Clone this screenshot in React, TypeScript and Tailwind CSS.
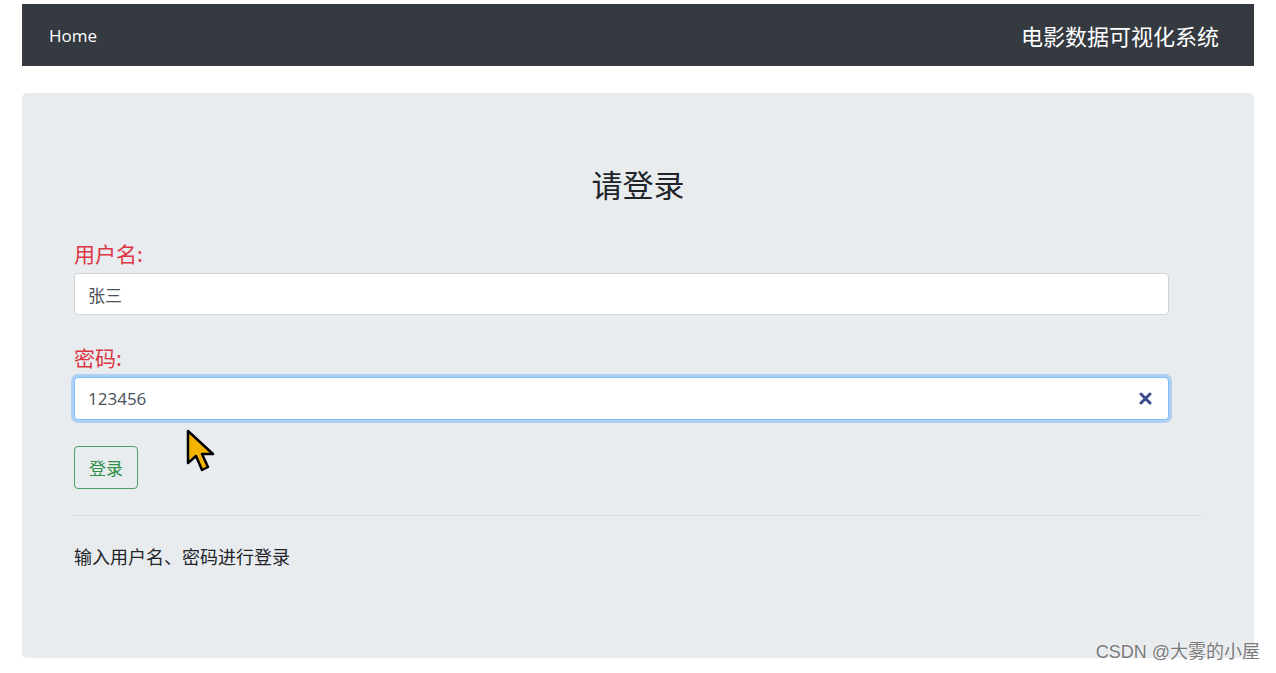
const cjk = { fontFamily: '"Noto Sans CJK SC", "Noto Sans", sans-serif' };

function Cursor() {
  return (
    <svg
      className="absolute left-[186px] top-[429px]"
      width="31"
      height="44"
      viewBox="0 0 31 44"
    >
      <path
        d="M2 2 L2 34 L10 27 L16 41 L22 38 L16 25 L27 25 Z"
        fill="#f5b400"
        stroke="#000"
        strokeWidth="2.5"
        strokeLinejoin="round"
      />
    </svg>
  );
}

export default function App() {
  return (
    <div className="relative min-h-[673px] bg-white px-[22px] pt-[4px]" style={cjk}>
      {/* Navbar */}
      <nav className="flex h-[62px] items-center justify-between bg-[#343a40] pl-[27px] pr-[35px]">
        <a className="pt-[2px] text-[17px] text-white" style={{ fontFamily: '"Open Sans", "Noto Sans", sans-serif' }}>
          Home
        </a>
        <span className="text-[22px] text-white">电影数据可视化系统</span>
      </nav>

      {/* Jumbotron */}
      <div className="relative mt-[27px] h-[565px] rounded-[5px] bg-[#e9ecef] px-[52px] pt-[72px]">
        <h1 className="text-center text-[31px] leading-[38px] text-[#212529]">请登录</h1>

        <form className="w-[1095px]">
          <label className="mt-[35px] block text-[21px] leading-[30px] text-[#dc3545]">用户名:</label>
          <input
            defaultValue="张三"
            className="mt-[5px] block h-[42px] w-full rounded-[4px] border border-[#ced4da] bg-white px-[13px] text-[17px] text-[#495057] outline-none"
          />

          <label className="mt-[27px] block text-[21px] leading-[30px] text-[#dc3545]">密码:</label>
          <div className="relative mt-[5px]">
            <input
              defaultValue="123456"
              className="block h-[43px] w-full rounded-[4px] border border-[#80bdff] bg-white px-[13px] text-[17px] text-[#495057] shadow-[0_0_0_3px_rgba(0,123,255,0.25)] outline-none"
              style={{ fontFamily: '"Open Sans", "Noto Sans", sans-serif' }}
            />
            <svg className="absolute right-[17px] top-[15px]" width="13" height="13" viewBox="0 0 13 13">
              <path d="M2 2 L11 11 M11 2 L2 11" stroke="#3b4a8c" strokeWidth="3" strokeLinecap="round" />
            </svg>
          </div>

          <button
            type="button"
            className="mt-[26px] h-[43px] w-[64px] rounded-[4px] border border-[#4f9e63] text-[17px] text-[#2f8f4a]"
          >
            登录
          </button>
        </form>

        <hr className="mt-[26px] border-t border-[#d9dcdf]" />

        <p className="mt-[27px] text-[18px] leading-[26px] text-[#212529]">输入用户名、密码进行登录</p>
      </div>

      <Cursor />

      <span
        className="absolute bottom-[7px] right-[16px] text-[18px] text-[#7a7a7a] [text-shadow:0_0_2px_#fff]"
        style={{ fontFamily: '"Liberation Sans", "Noto Sans CJK SC", sans-serif' }}
      >
        CSDN @大雾的小屋
      </span>
    </div>
  );
}
